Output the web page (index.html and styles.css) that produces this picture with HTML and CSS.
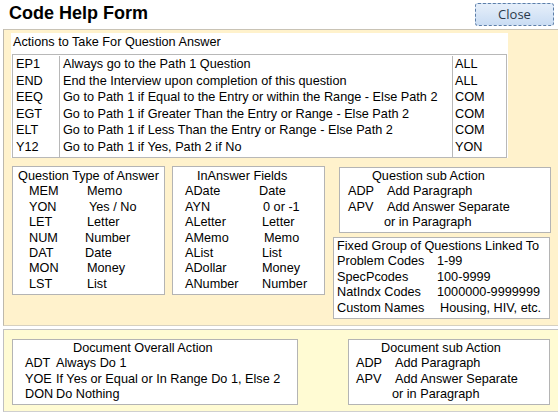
FILE: index.html
```html
<!DOCTYPE html>
<html>
<head>
<meta charset="utf-8">
<link rel="stylesheet" href="styles.css">
</head>
<body>
<div class="header">
  <div class="title">Code Help Form</div>
  <div class="close">Close</div>
</div>
<div class="upper">
  <div class="actions">
    <div class="actions-head">Actions to Take For Question Answer</div>
    <div class="atable">
      <div class="acol c1">
        <div>EP1</div><div>END</div><div>EEQ</div><div>EGT</div><div>ELT</div><div>Y12</div>
      </div>
      <div class="acol c2">
        <div>Always go to the Path 1 Question</div>
        <div>End the Interview upon completion of this question</div>
        <div>Go to Path 1 if Equal to the Entry or within the Range - Else Path 2</div>
        <div>Go to Path 1 if Greater Than the Entry or Range - Else Path 2</div>
        <div>Go to Path 1 if Less Than the Entry or Range - Else Path 2</div>
        <div>Go to Path 1 if Yes, Path 2 if No</div>
      </div>
      <div class="acol c3">
        <div>ALL</div><div>ALL</div><div>COM</div><div>COM</div><div>COM</div><div>YON</div>
      </div>
    </div>
  </div>
  <div class="middle">
    <div class="box qtype">
      <div class="btitle">Question Type of Answer</div>
      <div class="pairs">
        <span>MEM</span><span>Memo</span>
        <span>YON</span><span class="r2">Yes / No</span>
        <span>LET</span><span>Letter</span>
        <span>NUM</span><span class="l2">Number</span>
        <span>DAT</span><span class="l2">Date</span>
        <span>MON</span><span>Money</span>
        <span>LST</span><span>List</span>
      </div>
    </div>
    <div class="box inans">
      <div class="btitle">InAnswer Fields</div>
      <div class="pairs">
        <span>ADate</span><span class="l3">Date</span>
        <span>AYN</span><span class="r1">0 or -1</span>
        <span>ALetter</span><span>Letter</span>
        <span>AMemo</span><span class="r2">Memo</span>
        <span>AList</span><span>List</span>
        <span>ADollar</span><span>Money</span>
        <span>ANumber</span><span>Number</span>
      </div>
    </div>
    <div class="rightcol">
      <div class="box subq">
        <div class="btitle">Question sub Action</div>
        <div class="pairs">
          <span>ADP</span><span>Add Paragraph</span>
          <span>APV</span><span>Add Answer Separate</span>
          <span></span><span class="l3">or in Paragraph</span>
        </div>
      </div>
      <div class="box fixed">
        <div>Fixed Group of Questions Linked To</div>
        <div class="pairs">
          <span>Problem Codes</span><span>1-99</span>
          <span>SpecPcodes</span><span>100-9999</span>
          <span>NatIndx Codes</span><span>1000000-9999999</span>
          <span>Custom Names</span><span class="r3">Housing, HIV, etc.</span>
        </div>
      </div>
    </div>
  </div>
</div>
<div class="lower">
  <div class="box docall">
    <div class="btitle">Document Overall Action</div>
    <div class="pairs">
      <span>ADT</span><span>Always Do 1</span>
      <span>YOE</span><span>If Yes or Equal or In Range Do 1, Else 2</span>
      <span>DON</span><span>Do Nothing</span>
    </div>
  </div>
  <div class="box docsub">
    <div class="btitle">Document sub Action</div>
    <div class="pairs">
      <span>ADP</span><span>Add Paragraph</span>
      <span>APV</span><span>Add Answer Separate</span>
      <span></span><span class="l3">or in Paragraph</span>
    </div>
  </div>
</div>
</body>
</html>
```
FILE: styles.css
```css
* { box-sizing: border-box; }
html, body { margin: 0; padding: 0; background: #ffffff; }
body {
  width: 558px;
  height: 414px;
  overflow: hidden;
  font-family: "Liberation Sans", Arial, sans-serif;
  font-size: 12.7px;
  color: #000;
}
.header {
  height: 29px;
  display: flex;
  justify-content: space-between;
  align-items: flex-start;
}
.title {
  font-size: 18px;
  font-weight: bold;
  margin: 2px 0 0 9px;
  line-height: 22px;
}
.close {
  margin: 3px 4px 0 0;
  width: 79px;
  height: 23px;
  border: 1px dashed #5c7ea8;
  border-radius: 3px;
  background: linear-gradient(#e6effa, #c9dcf3);
  font-family: "Open Sans", "Liberation Sans", sans-serif;
  font-size: 13px;
  color: #2b3a4c;
  text-align: center;
  line-height: 20px;
}
.upper {
  margin-left: 3px;
  height: 297px;
  background: #fff2cc;
  border-top: 1px solid #c9c3b5;
  border-left: 1px solid #bdb8ac;
  border-bottom: 1px solid #d6d0c0;
  padding-top: 3px;
}
.actions {
  margin-left: 7px;
  width: 497px;
  background: #fff;
}
.actions-head {
  height: 21px;
  line-height: 18px;
  padding-left: 2px;
}
.atable {
  margin-left: 1px;
  width: 495px;
  height: 104px;
  display: flex;
  border: 1px solid #b8b8b8;
  padding-top: 1px;
  line-height: 16.6px;
}
.acol { height: 100%; }
.c1 { width: 47px; padding-left: 3px; border-right: 1px solid #b8b8b8; }
.c2 { width: 393px; padding-left: 3px; border-right: 1px solid #b8b8b8; }
.c3 { flex: 1; padding-left: 2px; }
.middle {
  display: flex;
  align-items: flex-start;
  margin-top: 8px;
  margin-left: 8px;
}
.box {
  background: #fff;
  border: 1px solid #b4b4b4;
  line-height: 15.4px;
}
.pairs { display: grid; }
.qtype {
  width: 153px;
  height: 129px;
  padding-top: 2px;
}
.qtype .btitle { text-align: center; }
.qtype .pairs { grid-template-columns: 58px 1fr; padding-left: 16px; }
.inans {
  margin-left: 7px;
  width: 153px;
  height: 129px;
  padding-top: 2px;
}
.inans .btitle { padding-left: 24px; }
.inans .pairs { grid-template-columns: 77px 1fr; padding-left: 12px; }
.rightcol {
  margin-left: 8px;
  width: 218px;
  display: flex;
  flex-direction: column;
}
.subq {
  margin-left: 6px;
  margin-top: 1px;
  width: 212px;
  height: 66px;
  padding-top: 1px;
}
.subq .btitle { padding-left: 32px; }
.subq .pairs { grid-template-columns: 39px 1fr; padding-left: 8px; }
.fixed {
  margin-top: 4px;
  width: 217px;
  height: 82px;
  padding-left: 3px;
  padding-top: 1px;
}
.fixed .pairs { grid-template-columns: 100px 1fr; }
.l2 { margin-left: -2px; }
.l3 { margin-left: -3px; }
.r1 { margin-left: 1px; }
.r2 { margin-left: 2px; }
.r3 { margin-left: 3px; }
.lower {
  margin-top: 3px;
  margin-left: 3px;
  height: 83px;
  background: #fffbd3;
  border-top: 1px solid #c2c2c2;
  border-left: 1px solid #c0c0c0;
  border-bottom: 1px solid #cfcfcf;
  display: flex;
  align-items: flex-start;
  padding-top: 9px;
}
.docall {
  margin-left: 8px;
  width: 286px;
  height: 66px;
  padding-top: 1px;
}
.docall .btitle { padding-left: 60px; }
.docall .pairs { grid-template-columns: 31px 1fr; padding-left: 12px; }
.docsub {
  margin-left: 50px;
  width: 202px;
  height: 66px;
  padding-top: 1px;
}
.docsub .btitle { padding-left: 32px; }
.docsub .pairs { grid-template-columns: 39px 1fr; padding-left: 7px; }
```
